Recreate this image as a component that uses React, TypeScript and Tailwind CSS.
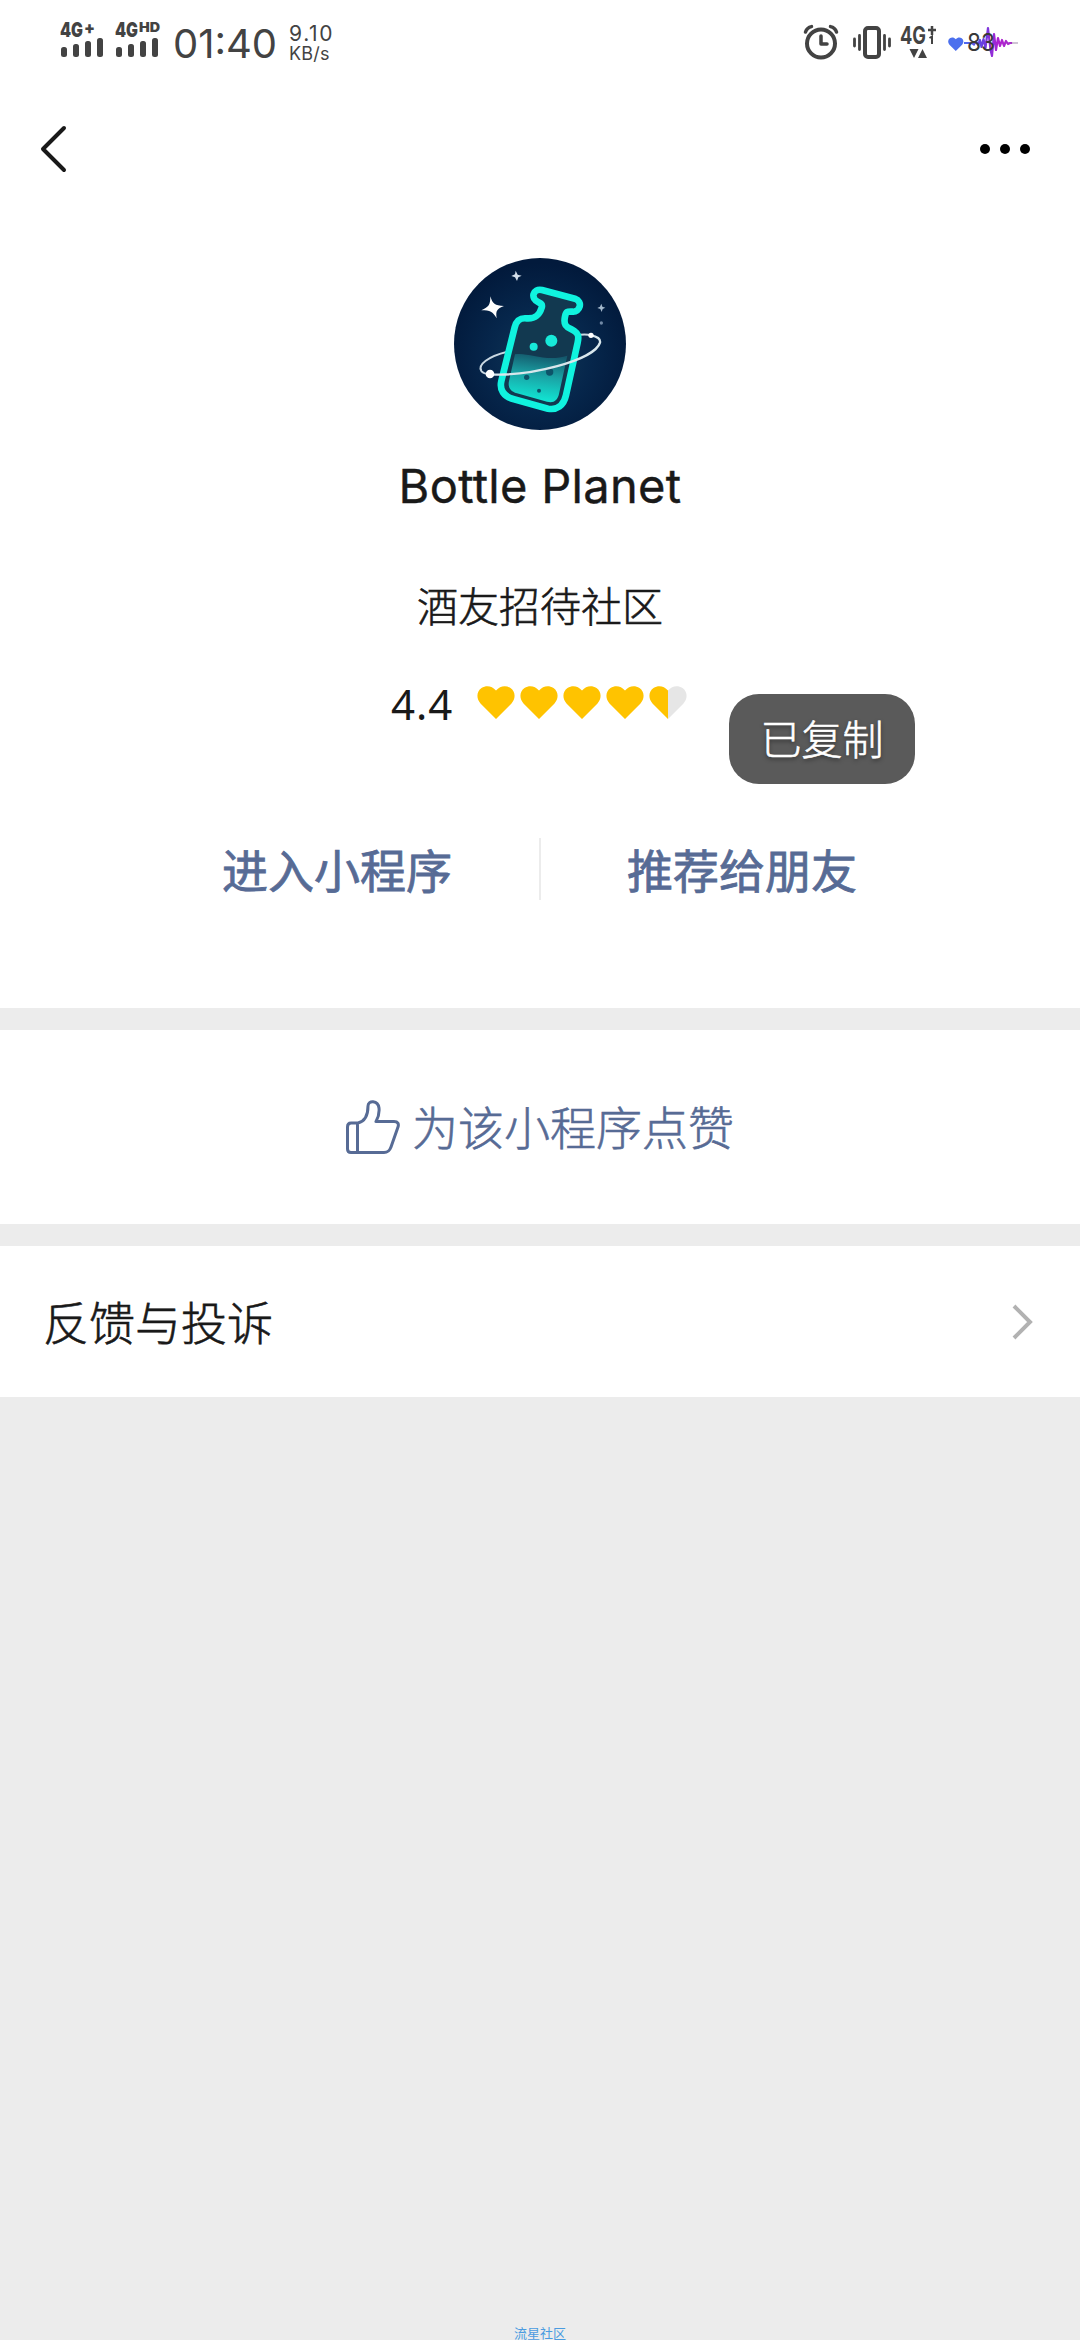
import { clsx } from 'clsx';

const HEART = 'M19 33 L3.5 17.5 C-1 12.5 -0.5 5.5 4.5 2 C9.5 -1 15 0 19 4.5 C23 0 28.5 -1 33.5 2 C38.5 5.5 39 12.5 34.5 17.5 Z';

function Signal({ suffix, className }: { suffix: string; className?: string }) {
  const bars = [10, 13, 16, 19];
  return (
    <svg className={clsx('h-9 w-[46px] overflow-visible text-[#434343]', className)} viewBox="0 0 46 36" fill="currentColor">
      <text x="0" y="15" fontSize="20" fontWeight="900" textLength="23" lengthAdjust="spacingAndGlyphs">4G</text>
      <text
        x="24"
        y={suffix === '+' ? 11.5 : 10}
        fontSize={suffix === '+' ? 17 : 13}
        fontWeight="900"
        textLength={suffix === '+' ? 11 : 21}
        lengthAdjust="spacingAndGlyphs"
      >
        {suffix}
      </text>
      {bars.map((h, i) => (
        <rect key={h} x={1 + i * 12} y={35 - h} width="6" height={h} rx="2.5" />
      ))}
    </svg>
  );
}

function StatusBar() {
  return (
    <div className="flex h-[84px] items-start pl-[60px] text-[#434343]">
      <Signal suffix="+" className="mt-[22px]" />
      <Signal suffix="HD" className="mt-[22px] ml-[9px]" />
      <span className="mt-[20px] ml-[12px] w-[104px] text-[40px] leading-[48px] whitespace-nowrap">01:40</span>
      <div className="mt-[24px] ml-[12px] flex w-[60px] flex-col text-[21px] leading-[19px] tracking-[1.7px]">
        <span>9.10</span>
        <span className="mt-[1px] text-[18px] tracking-[0.2px]">KB/s</span>
      </div>

      {/* Alarm */}
      <svg className="mt-[24px] ml-[454px] h-9 w-9" viewBox="0 0 36 36" fill="none" stroke="currentColor" strokeLinecap="round">
        <circle cx="18" cy="19.5" r="14" strokeWidth="4" />
        <path d="M18 12 V20 H24" strokeWidth="3.5" strokeLinejoin="round" />
        <path d="M2.5 8 C3.5 5 5.5 3.2 8.5 2.6 M33.5 8 C32.5 5 30.5 3.2 27.5 2.6" strokeWidth="3.5" />
      </svg>

      {/* Vibrate */}
      <svg className="mt-[24px] ml-[14px] h-9 w-[38px]" viewBox="0 0 38 36" fill="none" stroke="currentColor" strokeLinecap="round">
        <rect x="12" y="4" width="14" height="29" rx="3" strokeWidth="4" />
        <path d="M1.5 15 V22 M6.5 11.5 V25.5 M31.5 11.5 V25.5 M36.5 15 V22" strokeWidth="2.8" />
      </svg>

      {/* Data */}
      <svg className="mt-[24px] ml-[9px] h-9 w-[38px] overflow-visible" viewBox="0 0 38 36" fill="currentColor">
        <text x="0" y="19.5" fontSize="24" fontWeight="700" textLength="26" lengthAdjust="spacingAndGlyphs">4G</text>
        <path d="M28 6 H36 M32 2 V11" stroke="currentColor" strokeWidth="2.5" />
        <path d="M29.5 14 L32 12.5 V20" fill="none" stroke="currentColor" strokeWidth="2" />
        <path d="M9.5 25 H18.5 L14 34 Z M18 34 H27 L22.5 25 Z" />
      </svg>

      {/* Battery */}
      <svg className="mt-[20px] ml-[9px] h-10 w-[72px]" viewBox="0 0 72 40">
        <defs>
          <linearGradient id="pulse" x1="0" x2="1" y1="0" y2="0">
            <stop offset="0" stopColor="#4d6cf0" />
            <stop offset="0.35" stopColor="#6a3fe0" />
            <stop offset="0.65" stopColor="#b01fd0" />
            <stop offset="0.88" stopColor="#a52fc8" />
            <stop offset="0.9" stopColor="#cfc4d4" />
          </linearGradient>
        </defs>
        <path d={HEART} transform="translate(1 17.5) scale(0.41)" fill="#4c70ee" />
        <path
          d="M17 23 H25 L27 24.5 L29 21.5 L31 25 L33 20 L34.5 27 L36.5 19 L38.5 28 L41 8 L43.500 30 L45 36 L47 14 L49 30 L51 18 L53 26 L55 20 L57 26 L59 21 L61 24 L63 23 H71"
          fill="none"
          stroke="url(#pulse)"
          strokeWidth="2.2"
          strokeLinejoin="round"
        />
        <text x="20" y="31" fontSize="24" fill="#383838" textLength="28" lengthAdjust="spacingAndGlyphs">83</text>
      </svg>
    </div>
  );
}

function Logo() {
  return (
    <svg className="h-[172px] w-[172px]" viewBox="42 38 516 516">
      <defs>
        <radialGradient id="sky" cx="0.5" cy="0.58" r="0.55">
          <stop offset="0" stopColor="#103858" />
          <stop offset="0.55" stopColor="#06264b" />
          <stop offset="1" stopColor="#021a3c" />
        </radialGradient>
        <linearGradient id="liquid" x1="0.55" x2="0.4" y1="0" y2="1">
          <stop offset="0" stopColor="#14566a" />
          <stop offset="0.45" stopColor="#1aa3a5" />
          <stop offset="1" stopColor="#10ecd8" />
        </linearGradient>
      </defs>
      <circle cx="300" cy="296" r="258" fill="url(#sky)" />
      <path d="M202 319 C145 333 112 358 124 377 C128 383 136 386 150 387" fill="none" stroke="#c9d8e2" strokeWidth="6" />
      <path d="M420 268 C434 267 445 267 453 270" fill="none" stroke="#c9d8e2" strokeWidth="6" />
      <path
        d="M306 134 L405 160 C430 168 420 202 397 199 C381 198 378 199 375 214 C368 246 386 246 403 257 C415 265 417 273 413 292 L378 450 C371 482 350 495 324 490 L222 462 C190 453 178 433 184 407 L224 246 C229 226 239 217 260 219 C288 221 299 207 305 187 C308 178 303 174 296 171 C270 160 278 128 306 134 Z"
        fill="#123950"
        stroke="#10f3df"
        strokeWidth="20"
        strokeLinejoin="round"
      />
      <path d="M225 327 C262 319 318 352 382 331 L357 446 C352 466 341 474 321 469 L231 444 C211 438 203 426 207 407 Z" fill="url(#liquid)" />
      <circle cx="334" cy="286" r="18" fill="#17ead9" />
      <circle cx="281" cy="304" r="12" fill="#17ead9" />
      <circle cx="329" cy="380" r="11" fill="#0d5369" />
      <circle cx="260" cy="396" r="8" fill="#0d5369" />
      <circle cx="297" cy="436" r="6" fill="#0d5369" />
      <path d="M150 387 C265 394 463 346 480 292 C482 281 472 273 453 270" fill="none" stroke="#d9e7ec" strokeWidth="7" />
      <circle cx="150" cy="386" r="13" fill="#fff" />
      <circle cx="453" cy="270" r="8" fill="#fff" />
      <path d="M151 153 C158 176 164 181 192 182 C170 191 167 196 170 219 C158 199 151 195 124 195 C147 184 151 179 151 153 Z" fill="#fff" />
      <path d="M227 76 L233 88 L245 91 L235 96 L231 107 L225 96 L214 92 L225 87 Z" fill="#d3deea" />
      <path d="M484 175 L487 184 L496 187 L488 191 L485 200 L481 191 L472 188 L480 184 Z" fill="#a5b9cc" />
      <circle cx="484" cy="233" r="5" fill="#7088a5" />
    </svg>
  );
}

function Rating() {
  return (
    <div className="flex h-[60px] items-center pl-[391px]">
      <span className="w-[86px] font-['Noto_Sans'] text-[42px] leading-[60px] tracking-[1px] text-[#191919]">4.4</span>
      <div className="-mt-[3px] flex gap-[5px]">
        {[1, 1, 1, 1, 0.5].map((fill, i) => (
          <svg key={i} className="h-[33px] w-[38px]" viewBox="0 0 38 33">
            <defs>
              <linearGradient id={`heart${i}`}>
                <stop offset={fill} stopColor="#ffc300" />
                <stop offset={fill} stopColor="#e6e6e6" />
              </linearGradient>
            </defs>
            <path d={HEART} fill={fill === 1 ? '#ffc300' : `url(#heart${i})`} />
          </svg>
        ))}
      </div>
    </div>
  );
}

export default function App() {
  return (
    <div className="relative flex h-[2340px] w-[1080px] flex-col overflow-hidden bg-[#ececec] font-['Inter','Noto_Sans_CJK_SC',sans-serif] text-[#191919]">
      <section className="flex h-[1008px] flex-col bg-white">
        <StatusBar />

        {/* Navigation */}
        <div className="flex h-[130px] items-start justify-between pr-[50px] pl-[40px]">
          <svg className="mt-[41px] h-12 w-7" viewBox="0 0 28 48" fill="none" stroke="#191919" strokeWidth="4" strokeLinecap="round" strokeLinejoin="round">
            <path d="M24 3 L3 24 L24 45" />
          </svg>
          <div className="mt-[60px] flex gap-[10px]">
            <span className="h-[10px] w-[10px] rounded-full bg-black" />
            <span className="h-[10px] w-[10px] rounded-full bg-black" />
            <span className="h-[10px] w-[10px] rounded-full bg-black" />
          </div>
        </div>

        {/* Profile */}
        <div className="flex flex-col items-center pt-[44px]">
          <Logo />
          <h1 className="mt-[26px] text-[47px] leading-[60px] tracking-[0.3px] [-webkit-text-stroke:0.4px]">Bottle Planet</h1>
          <p className="mt-[61px] text-[41px] leading-[60px] font-light [-webkit-text-stroke:0.6px]">酒友招待社区</p>
        </div>
        <div className="mt-[37px]">
          <Rating />
        </div>

        {/* Actions */}
        <div className="mt-[104px] flex h-[62px] items-center text-[46px] leading-[62px] text-[#576b95]">
          <button className="w-[539px] pt-[3px] pl-[222px] text-left [-webkit-text-stroke:0.8px]">进入小程序</button>
          <span className="h-[62px] w-[2px] bg-[#ececec]" />
          <button className="pt-[3px] pl-[86px] [-webkit-text-stroke:0.8px]">推荐给朋友</button>
        </div>
      </section>

      <section className="mt-[22px] flex h-[194px] items-center justify-center bg-white text-[#576b95]">
        <svg className="mr-[12px] h-[54px] w-[54px]" viewBox="0 0 54 54" fill="none" stroke="currentColor" strokeWidth="3" strokeLinejoin="round">
          <path d="M12 23 C20 21 22 13 22 6 C22 0 32 0 33 8 C33.5 13 32 18 30 21.5 H48 C52 21.5 53 24 52 27 L45 47 C43.5 51 42 52.5 38 52.5 H5 C2.5 52.5 1.5 51.5 1.5 49 V27 C1.5 24 2.5 23 5 23 Z M11.5 23 V52.5" />
        </svg>
        <span className="pt-[2px] text-[46px] font-light [-webkit-text-stroke:0.6px]">为该小程序点赞</span>
      </section>

      <section className="mt-[22px] flex h-[151px] items-center justify-between bg-white pr-[47px] pl-[43px]">
        <span className="pt-[3px] text-[46px] font-light [-webkit-text-stroke:0.6px]">反馈与投诉</span>
        <svg className="h-9 w-[21px]" viewBox="0 0 21 36" fill="none" stroke="#b2b2b2" strokeWidth="4">
          <path d="M2 2 L18 18 L2 34" />
        </svg>
      </section>

      <footer className="mt-auto text-center text-[13px] leading-[13px] text-[#4a9be0]">流星社区</footer>

      {/* Toast */}
      <div className="absolute top-[694px] left-[729px] flex h-[90px] w-[186px] items-center justify-center rounded-[30px] bg-[#5a5a5a] pt-[4px] text-[41px] font-light text-white [-webkit-text-stroke:0.6px] [text-shadow:0_2px_4px_rgba(0,0,0,0.5)]">
        已复制
      </div>
    </div>
  );
}
